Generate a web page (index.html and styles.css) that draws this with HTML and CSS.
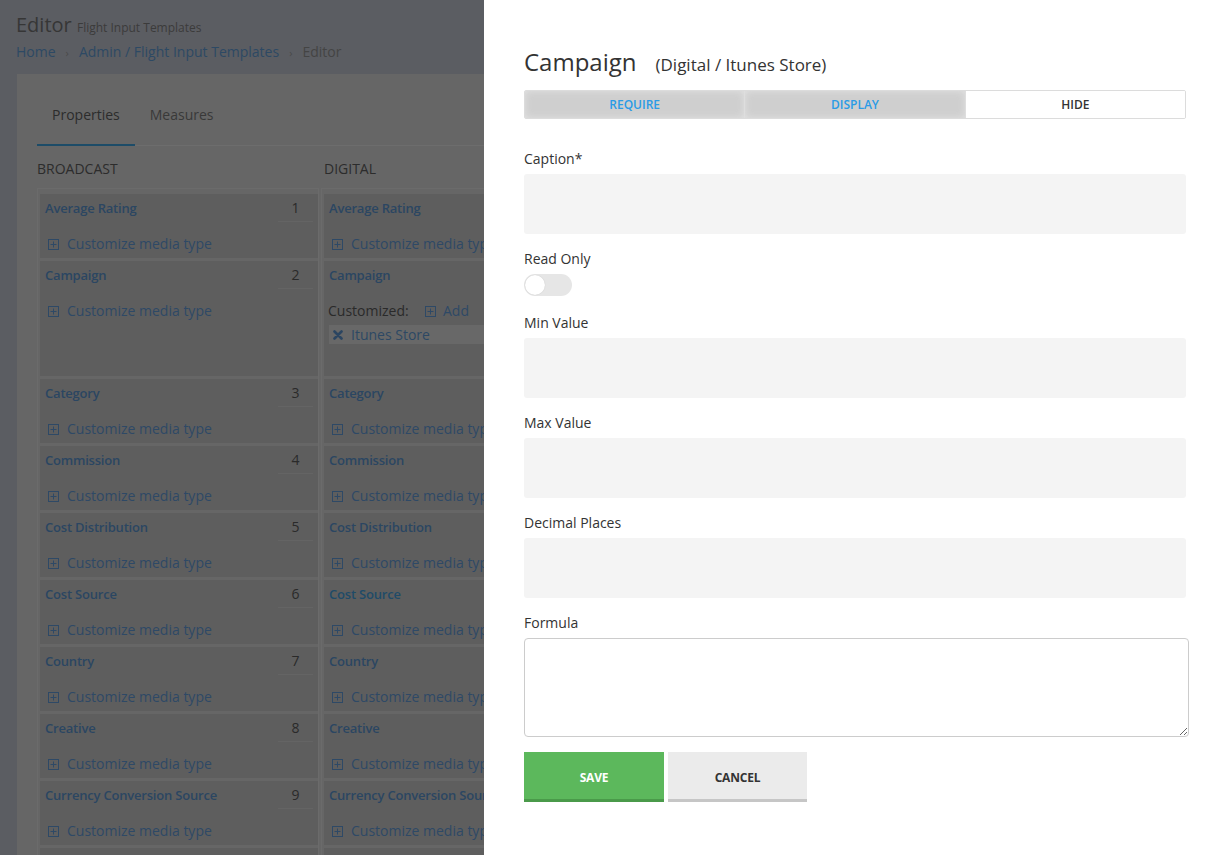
FILE: index.html
```html
<!DOCTYPE html>
<html lang="en">
<head>
<meta charset="utf-8">
<title>Editor - Flight Input Templates</title>
<link rel="stylesheet" href="styles.css">
</head>
<body>
<div class="page">
  <header class="page-head">
    <h1 class="title">Editor <small>Flight Input Templates</small></h1>
    <nav class="crumbs"><a class="crumb-link">Home</a><span class="sep">›</span><a class="crumb-link">Admin / Flight Input Templates</a><span class="sep">›</span><span class="crumb-cur">Editor</span></nav>
  </header>
  <section class="card">
    <ul class="tabs">
      <li class="tab active">Properties</li>
      <li class="tab">Measures</li>
    </ul>
    <div class="grid">
      <div class="col-head">BROADCAST</div>
      <div class="col-head col-head-2">DIGITAL</div>

      <!-- row 1 -->
      <div class="cell first"><div class="item"><div class="item-head"><span class="item-name">Average Rating</span><span class="item-num">1</span></div><div class="customize"><svg class="plus" viewBox="0 0 11 11"><rect x="0.5" y="0.5" width="10" height="10"/><path d="M5.5 2.5v6M2.5 5.5h6"/></svg>Customize media type</div></div></div>
      <div class="cell first"><div class="item"><div class="item-head"><span class="item-name">Average Rating</span><span class="item-num">1</span></div><div class="customize"><svg class="plus" viewBox="0 0 11 11"><rect x="0.5" y="0.5" width="10" height="10"/><path d="M5.5 2.5v6M2.5 5.5h6"/></svg>Customize media type</div></div></div>

      <!-- row 2 -->
      <div class="cell"><div class="item"><div class="item-head"><span class="item-name">Campaign</span><span class="item-num">2</span></div><div class="customize"><svg class="plus" viewBox="0 0 11 11"><rect x="0.5" y="0.5" width="10" height="10"/><path d="M5.5 2.5v6M2.5 5.5h6"/></svg>Customize media type</div></div></div>
      <div class="cell"><div class="item"><div class="item-head"><span class="item-name">Campaign</span><span class="item-num">2</span></div>
        <div class="customized"><span class="customized-label">Customized:</span><span class="add"><svg class="plus" viewBox="0 0 11 11"><rect x="0.5" y="0.5" width="10" height="10"/><path d="M5.5 2.5v6M2.5 5.5h6"/></svg>Add</span></div>
        <div class="custom-row"><svg class="remove" viewBox="0 0 10 10"><path d="M1.5 1.5l7 7M8.5 1.5l-7 7"/></svg>Itunes Store</div>
      </div></div>

      <!-- row 3 -->
      <div class="cell"><div class="item"><div class="item-head"><span class="item-name">Category</span><span class="item-num">3</span></div><div class="customize"><svg class="plus" viewBox="0 0 11 11"><rect x="0.5" y="0.5" width="10" height="10"/><path d="M5.5 2.5v6M2.5 5.5h6"/></svg>Customize media type</div></div></div>
      <div class="cell"><div class="item"><div class="item-head"><span class="item-name">Category</span><span class="item-num">3</span></div><div class="customize"><svg class="plus" viewBox="0 0 11 11"><rect x="0.5" y="0.5" width="10" height="10"/><path d="M5.5 2.5v6M2.5 5.5h6"/></svg>Customize media type</div></div></div>

      <!-- row 4 -->
      <div class="cell"><div class="item"><div class="item-head"><span class="item-name">Commission</span><span class="item-num">4</span></div><div class="customize"><svg class="plus" viewBox="0 0 11 11"><rect x="0.5" y="0.5" width="10" height="10"/><path d="M5.5 2.5v6M2.5 5.5h6"/></svg>Customize media type</div></div></div>
      <div class="cell"><div class="item"><div class="item-head"><span class="item-name">Commission</span><span class="item-num">4</span></div><div class="customize"><svg class="plus" viewBox="0 0 11 11"><rect x="0.5" y="0.5" width="10" height="10"/><path d="M5.5 2.5v6M2.5 5.5h6"/></svg>Customize media type</div></div></div>

      <!-- row 5 -->
      <div class="cell"><div class="item"><div class="item-head"><span class="item-name">Cost Distribution</span><span class="item-num">5</span></div><div class="customize"><svg class="plus" viewBox="0 0 11 11"><rect x="0.5" y="0.5" width="10" height="10"/><path d="M5.5 2.5v6M2.5 5.5h6"/></svg>Customize media type</div></div></div>
      <div class="cell"><div class="item"><div class="item-head"><span class="item-name">Cost Distribution</span><span class="item-num">5</span></div><div class="customize"><svg class="plus" viewBox="0 0 11 11"><rect x="0.5" y="0.5" width="10" height="10"/><path d="M5.5 2.5v6M2.5 5.5h6"/></svg>Customize media type</div></div></div>

      <!-- row 6 -->
      <div class="cell"><div class="item"><div class="item-head"><span class="item-name">Cost Source</span><span class="item-num">6</span></div><div class="customize"><svg class="plus" viewBox="0 0 11 11"><rect x="0.5" y="0.5" width="10" height="10"/><path d="M5.5 2.5v6M2.5 5.5h6"/></svg>Customize media type</div></div></div>
      <div class="cell"><div class="item"><div class="item-head"><span class="item-name item-name-hover">Cost Source</span><span class="item-num">6</span></div><div class="customize"><svg class="plus" viewBox="0 0 11 11"><rect x="0.5" y="0.5" width="10" height="10"/><path d="M5.5 2.5v6M2.5 5.5h6"/></svg>Customize media type</div></div></div>

      <!-- row 7 -->
      <div class="cell"><div class="item"><div class="item-head"><span class="item-name">Country</span><span class="item-num">7</span></div><div class="customize"><svg class="plus" viewBox="0 0 11 11"><rect x="0.5" y="0.5" width="10" height="10"/><path d="M5.5 2.5v6M2.5 5.5h6"/></svg>Customize media type</div></div></div>
      <div class="cell"><div class="item"><div class="item-head"><span class="item-name">Country</span><span class="item-num">7</span></div><div class="customize"><svg class="plus" viewBox="0 0 11 11"><rect x="0.5" y="0.5" width="10" height="10"/><path d="M5.5 2.5v6M2.5 5.5h6"/></svg>Customize media type</div></div></div>

      <!-- row 8 -->
      <div class="cell"><div class="item"><div class="item-head"><span class="item-name">Creative</span><span class="item-num">8</span></div><div class="customize"><svg class="plus" viewBox="0 0 11 11"><rect x="0.5" y="0.5" width="10" height="10"/><path d="M5.5 2.5v6M2.5 5.5h6"/></svg>Customize media type</div></div></div>
      <div class="cell"><div class="item"><div class="item-head"><span class="item-name">Creative</span><span class="item-num">8</span></div><div class="customize"><svg class="plus" viewBox="0 0 11 11"><rect x="0.5" y="0.5" width="10" height="10"/><path d="M5.5 2.5v6M2.5 5.5h6"/></svg>Customize media type</div></div></div>

      <!-- row 9 -->
      <div class="cell"><div class="item"><div class="item-head"><span class="item-name">Currency Conversion Source</span><span class="item-num">9</span></div><div class="customize"><svg class="plus" viewBox="0 0 11 11"><rect x="0.5" y="0.5" width="10" height="10"/><path d="M5.5 2.5v6M2.5 5.5h6"/></svg>Customize media type</div></div></div>
      <div class="cell"><div class="item"><div class="item-head"><span class="item-name">Currency Conversion Source</span><span class="item-num">9</span></div><div class="customize"><svg class="plus" viewBox="0 0 11 11"><rect x="0.5" y="0.5" width="10" height="10"/><path d="M5.5 2.5v6M2.5 5.5h6"/></svg>Customize media type</div></div></div>

      <!-- row 10 -->
      <div class="cell"><div class="item"><div class="item-head"><span class="item-name">Date</span><span class="item-num">10</span></div><div class="customize"><svg class="plus" viewBox="0 0 11 11"><rect x="0.5" y="0.5" width="10" height="10"/><path d="M5.5 2.5v6M2.5 5.5h6"/></svg>Customize media type</div></div></div>
      <div class="cell"><div class="item"><div class="item-head"><span class="item-name">Date</span><span class="item-num">10</span></div><div class="customize"><svg class="plus" viewBox="0 0 11 11"><rect x="0.5" y="0.5" width="10" height="10"/><path d="M5.5 2.5v6M2.5 5.5h6"/></svg>Customize media type</div></div></div>
    </div>
  </section>
</div>

<aside class="panel">
  <h2 class="panel-title">Campaign <small class="panel-sub">(Digital / Itunes Store)</small></h2>
  <div class="seg">
    <div class="seg-btn on">Require</div>
    <div class="seg-btn on">Display</div>
    <div class="seg-btn">Hide</div>
  </div>
  <form class="form">
    <label class="field-label">Caption*</label>
    <div class="input"></div>
    <label class="field-label">Read Only</label>
    <div class="toggle"><span class="knob"></span></div>
    <label class="field-label">Min Value</label>
    <div class="input"></div>
    <label class="field-label">Max Value</label>
    <div class="input"></div>
    <label class="field-label">Decimal Places</label>
    <div class="input"></div>
    <label class="field-label">Formula</label>
    <textarea class="textarea"></textarea>
    <div class="actions">
      <button type="button" class="btn btn-save">Save</button>
      <button type="button" class="btn btn-cancel">Cancel</button>
    </div>
  </form>
</aside>
</body>
</html>
```

FILE: styles.css
```css
html, body {
  margin: 0;
  height: 855px;
  overflow: hidden;
}
body {
  font-family: "Open Sans", "Noto Sans", sans-serif;
  background: #5b5d62;
}

/* ---------- dimmed page behind the drawer ---------- */
.page {
  padding: 11px 0 0 16px;
}
.title {
  margin: 0;
  font-size: 20px;
  font-weight: 400;
  line-height: 28px;
  color: #363636;
}
.title small {
  font-size: 12px;
  color: #3b3b3b;
  margin-left: 0;
}
.crumbs {
  margin-top: 0;
  font-size: 14px;
  line-height: 20px;
  color: #424242;
}
.crumb-link {
  color: #2d4964;
}
.crumb-cur {
  color: #444;
}
.sep {
  font-size: 11px;
  color: #4a4a4a;
  margin: 0 10px;
}

.card {
  margin: 11px 17px 0 1px;
  background: #666666;
  padding: 20px 20px 0;
}
.tabs {
  list-style: none;
  margin: 0;
  padding: 0;
  display: flex;
  border-bottom: 1px solid #6d6d6d;
}
.tab {
  padding: 11px 15px 19px;
  font-size: 14px;
  line-height: 20px;
  color: #393939;
  border-bottom: 2px solid transparent;
  margin-bottom: -1px;
}
.tab.active {
  color: #2c2c2c;
  border-bottom-color: #1d4c68;
}

.grid {
  margin-top: 13px;
  display: grid;
  grid-template-columns: 282px 282px;
  column-gap: 2px;
}
.col-head {
  font-size: 14px;
  line-height: 20px;
  color: #2c2c2c;
  padding-bottom: 9px;
}
.col-head-2 {
  padding-left: 3px;
}
.cell {
  border-left: 1px solid #6b6b6b;
  border-right: 1px solid #6b6b6b;
  padding: 0 0 3px 2px;
  display: flex;
  flex-direction: column;
}
.cell.first {
  border-top: 1px solid #6b6b6b;
  padding-top: 5px;
}
.item {
  flex: 1;
  background: #5e5e5e;
  padding-bottom: 4px;
}
.item-head {
  display: flex;
  align-items: center;
  height: 28px;
  padding: 0 5px;
}
.item-name {
  flex: 1;
  font-size: 13px;
  font-weight: 600;
  color: #2b4662;
  letter-spacing: -0.2px;
  white-space: nowrap;
}
.item-name-hover {
  color: #1f4b68;
}
.item-num {
  width: 35px;
  height: 28px;
  box-sizing: border-box;
  border-bottom: 1px solid #646464;
  text-align: center;
  line-height: 28px;
  font-size: 14px;
  color: #2a2a2a;
}
.customize {
  margin-top: 12px;
  padding: 0 8px;
  display: flex;
  align-items: center;
  gap: 8px;
  font-size: 14px;
  line-height: 20px;
  color: #2e4966;
  white-space: nowrap;
}
.plus {
  width: 11px;
  height: 11px;
  flex: none;
}
.plus rect,
.plus path {
  fill: none;
  stroke: #2e4966;
  stroke-width: 1;
}
.customized {
  margin-top: 12px;
  padding: 0 4px;
  display: flex;
  align-items: center;
  font-size: 14px;
  line-height: 20px;
  white-space: nowrap;
}
.customized-label {
  color: #2a2a2a;
  width: 97px;
}
.add {
  display: flex;
  align-items: center;
  gap: 7px;
  color: #2e4966;
}
.custom-row {
  margin: 4px 0 28px 5px;
  height: 19px;
  background: #686868;
  display: flex;
  align-items: center;
  gap: 8px;
  padding-left: 4px;
  font-size: 14px;
  color: #2d4864;
  white-space: nowrap;
}
.remove {
  width: 10px;
  height: 10px;
  flex: none;
}
.remove path {
  stroke: #2b4561;
  stroke-width: 2.6;
  stroke-linecap: round;
  fill: none;
}

/* ---------- drawer ---------- */
.panel {
  position: fixed;
  top: 0;
  right: 0;
  width: 731px;
  height: 855px;
  box-sizing: border-box;
  padding: 46px 29px 0 40px;
  background: #ffffff;
  color: #333;
}
.panel-title {
  margin: 0;
  display: flex;
  align-items: baseline;
  gap: 19px;
  font-size: 24px;
  font-weight: 400;
  line-height: 32px;
  color: #333;
}
.panel-sub {
  font-size: 17px;
  color: #333;
}
.seg {
  margin-top: 9px;
  display: flex;
  height: 29px;
  box-sizing: border-box;
  border: 1px solid #dcdcdc;
  border-radius: 2px;
  overflow: hidden;
}
.seg-btn {
  flex: 1;
  display: flex;
  align-items: center;
  justify-content: center;
  font-size: 12px;
  font-weight: 600;
  text-transform: uppercase;
  color: #333;
  background: #fff;
}
.seg-btn.on {
  color: #2a9be6;
  background: #cfcfcf;
  box-shadow: inset 0 0 7px #e2e2e2;
  border-right: 1px solid #dedede;
}
.form {
  margin-top: 29px;
  display: flex;
  flex-direction: column;
  align-items: flex-start;
}
.field-label {
  display: block;
  font-size: 14px;
  line-height: 20px;
  color: #333;
  padding-top: 1px;
  margin-bottom: 5px;
}
.input {
  align-self: stretch;
  height: 60px;
  background: #f4f4f4;
  border-radius: 3px;
  margin-bottom: 14px;
}
.toggle {
  width: 48px;
  height: 22px;
  box-sizing: border-box;
  border-radius: 11px;
  background: #e6e6e6;
  padding: 1px;
  display: flex;
  align-items: center;
  margin-bottom: 16px;
}
.knob {
  width: 20px;
  height: 20px;
  border-radius: 50%;
  background: #fff;
  box-shadow: 0 0 1px rgba(0, 0, 0, 0.2);
}
.textarea {
  display: block;
  width: 665px;
  height: 99px;
  box-sizing: border-box;
  border: 1px solid #cccccc;
  border-radius: 4px;
  resize: both;
  margin: 0;
  font-family: inherit;
}
.actions {
  margin-top: 15px;
  display: flex;
  gap: 4px;
}
.btn {
  height: 50px;
  border: 0;
  border-radius: 0;
  font-family: "Open Sans", sans-serif;
  font-size: 12px;
  font-weight: 700;
  text-transform: uppercase;
  letter-spacing: -0.2px;
  padding: 3px 0 0;
  cursor: pointer;
}
.btn-save {
  width: 140px;
  background: #5cb85c;
  border-bottom: 3px solid #4a9a4a;
  color: #fff;
}
.btn-cancel {
  width: 139px;
  background: #ebebeb;
  border-bottom: 3px solid #c6c6c6;
  color: #333;
}
```
